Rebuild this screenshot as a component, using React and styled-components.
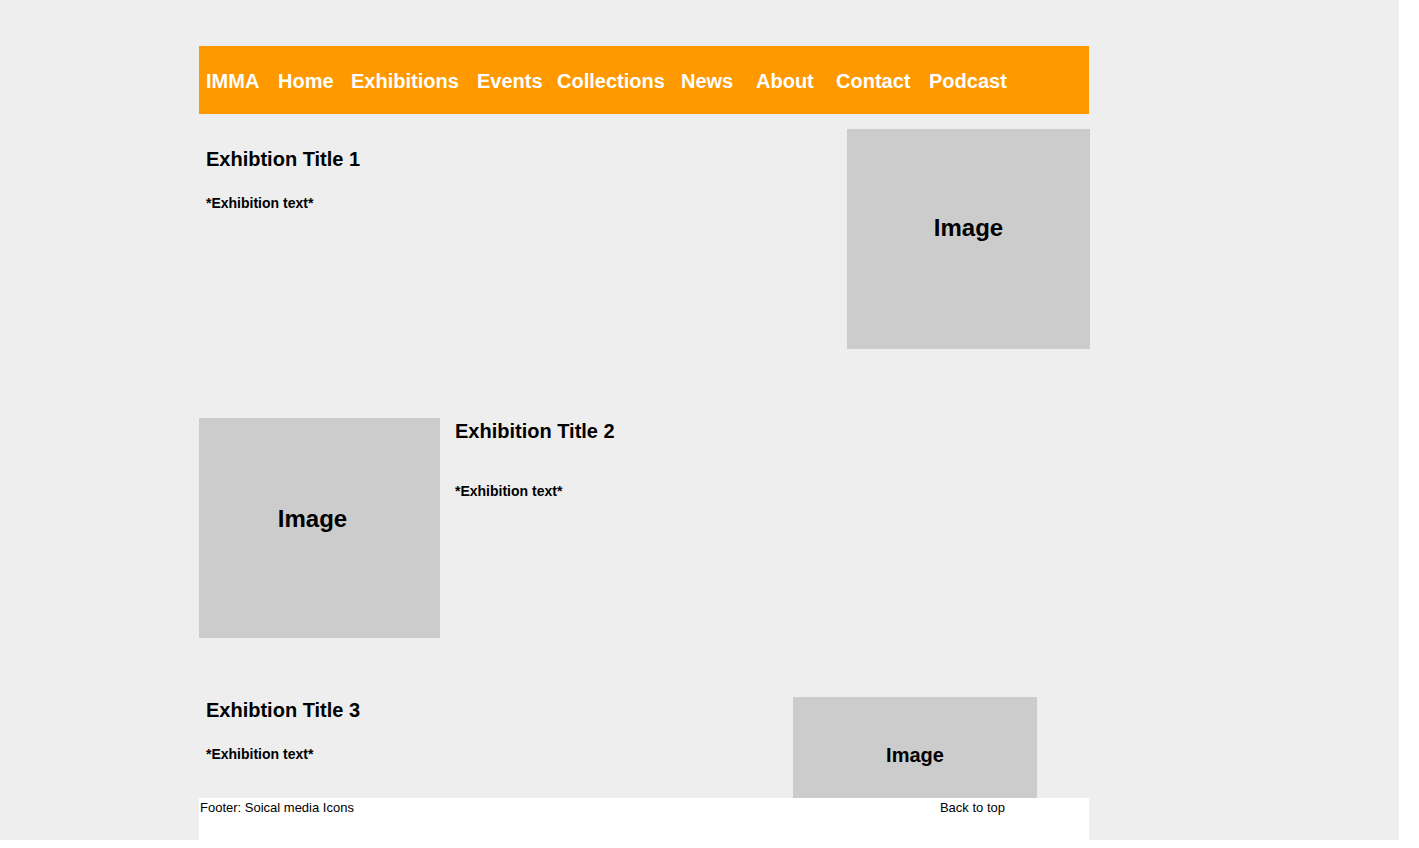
import React from "react";
import styled, { createGlobalStyle } from "styled-components";

const GlobalStyle = createGlobalStyle`
  html, body {
    margin: 0;
    padding: 0;
    background: #ffffff;
  }
  body {
    font-family: "Liberation Sans", Arial, sans-serif;
    color: #000;
  }
`;

const Viewport = styled.div`
  width: 1399px;
  height: 840px;
  background: #eeeeee;
  overflow: hidden;
`;

const Column = styled.div`
  width: 890px;
  height: 100%;
  margin-left: 199px;
  padding-top: 46px;
  box-sizing: border-box;
  display: flex;
  flex-direction: column;
`;

const Nav = styled.nav`
  height: 68px;
  flex-shrink: 0;
  background: #ff9900;
  display: flex;
  align-items: center;
  padding: 3px 0 0 7px;
  box-sizing: border-box;
`;

const NavLink = styled.a`
  width: ${(p) => (p.$w ? `${p.$w}px` : "auto")};
  flex-shrink: 0;
  color: #ffffff;
  font-size: 20px;
  font-weight: bold;
  line-height: 23px;
  text-decoration: none;
  white-space: nowrap;
`;

const Main = styled.main`
  flex: 1;
  overflow: hidden;
  margin-right: -1px;
  padding-top: 15px;
`;

const Section = styled.section`
  display: flex;
  align-items: flex-start;
  margin-bottom: ${(p) => p.$after || 0}px;
`;

const TextBlock = styled.div`
  flex: 1;
  padding: ${(p) => p.$top || 0}px 0 0 ${(p) => p.$left || 0}px;
`;

const Title = styled.h2`
  margin: 0;
  font-size: 20px;
  font-weight: bold;
  line-height: 23px;
`;

const Body = styled.p`
  margin: ${(p) => p.$gap || 0}px 0 0;
  font-size: 14px;
  font-weight: bold;
  line-height: 16px;
`;

const ImageBox = styled.div`
  flex-shrink: 0;
  width: ${(p) => p.$w}px;
  height: 220px;
  margin-right: ${(p) => p.$right || 0}px;
  background: #cccccc;
  display: flex;
  justify-content: center;
  align-items: flex-start;
  padding-top: ${(p) => p.$labelTop}px;
  padding-right: ${(p) => p.$shift || 0}px;
  box-sizing: border-box;
  font-size: ${(p) => p.$size || 24}px;
  font-weight: bold;
  line-height: ${(p) => (p.$size === 20 ? 23 : 28)}px;
`;

const Footer = styled.footer`
  height: 42px;
  flex-shrink: 0;
  background: #ffffff;
  display: flex;
  justify-content: space-between;
  align-items: flex-start;
  padding: 2px 84px 0 1px;
  box-sizing: border-box;
  font-size: 13px;
  line-height: 15px;
`;

const FooterLink = styled.a`
  color: #000;
  text-decoration: none;
`;

const links = [
  ["IMMA", 72],
  ["Home", 73],
  ["Exhibitions", 126],
  ["Events", 80],
  ["Collections", 124],
  ["News", 75],
  ["About", 80],
  ["Contact", 93],
  ["Podcast", 0],
];

export default function App() {
  return (
    <>
      <GlobalStyle />
      <Viewport>
        <Column>
          <Nav>
            {links.map(([label, w]) => (
              <NavLink key={label} href="#" $w={w}>
                {label}
              </NavLink>
            ))}
          </Nav>
          <Main>
            <Section $after={69}>
              <TextBlock $top={19} $left={7}>
                <Title>Exhibtion Title 1</Title>
                <Body $gap={24}>*Exhibition text*</Body>
              </TextBlock>
              <ImageBox $w={243} $labelTop={85}>
                Image
              </ImageBox>
            </Section>

            <Section $after={59}>
              <ImageBox $w={241} $labelTop={87} $shift={14}>
                Image
              </ImageBox>
              <TextBlock $top={2} $left={15}>
                <Title>Exhibition Title 2</Title>
                <Body $gap={40}>*Exhibition text*</Body>
              </TextBlock>
            </Section>

            <Section>
              <TextBlock $top={2} $left={7}>
                <Title>Exhibtion Title 3</Title>
                <Body $gap={24}>*Exhibition text*</Body>
              </TextBlock>
              <ImageBox $w={244} $right={53} $labelTop={47} $size={20}>
                Image
              </ImageBox>
            </Section>
          </Main>
          <Footer>
            <span>Footer: Soical media Icons</span>
            <FooterLink href="#top">Back to top</FooterLink>
          </Footer>
        </Column>
      </Viewport>
    </>
  );
}
